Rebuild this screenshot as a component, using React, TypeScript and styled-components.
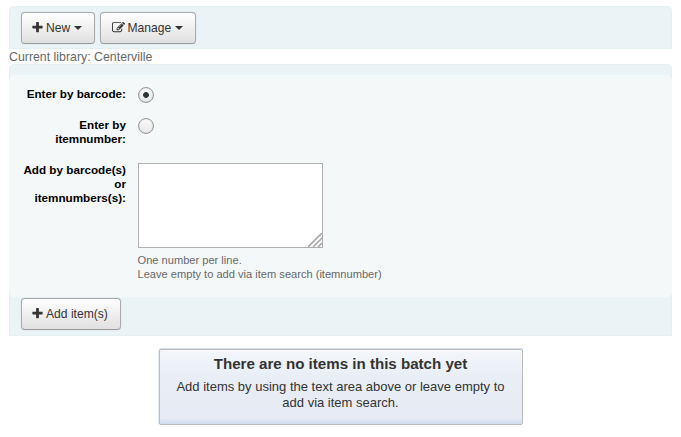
import React, { useState } from "react";
import styled, { createGlobalStyle } from "styled-components";

const GlobalStyle = createGlobalStyle`
  * { box-sizing: border-box; }
  body {
    margin: 0;
    background: #fff;
    color: #333;
    font-family: "Liberation Sans", Arial, sans-serif;
    font-size: 12.35px;
  }
`;

const Page = styled.main`
  padding: 6px 9px 0;
`;

const Toolbar = styled.div`
  display: flex;
  gap: 5px;
  height: 43px;
  padding: 5px 11px 0;
  background: #eaf3f5;
  border: 1px solid #e4eff0;
  border-radius: 5px 5px 0 0;
`;

const Button = styled.button<{ $width: number }>`
  display: flex;
  align-items: center;
  justify-content: flex-start;
  width: ${(p) => p.$width}px;
  height: 32px;
  padding: 0 0 1px 10px;
  border: 1px solid #aaa;
  border-bottom-color: #999;
  border-radius: 4px;
  background: linear-gradient(#fff, #e0e0e0);
  box-shadow: 0 0 1px rgba(0, 0, 0, 0.25);
  color: #333;
  font: 12.1px/18px "Liberation Sans", Arial, sans-serif;
  white-space: pre;
`;

const Icon = styled.svg<{ $before: number; $after: number }>`
  width: 13px;
  height: 13px;
  margin: 0 ${(p) => p.$after}px 0 ${(p) => p.$before}px;
  flex: none;
`;

const Caret = styled.span`
  width: 0;
  height: 0;
  margin: 1px 0 0 4px;
  border: 4px solid transparent;
  border-top-color: #333;
  border-bottom: 0;
`;

const Library = styled.div`
  height: 15px;
  color: #696969;
  line-height: 16px;
`;

const Form = styled.form`
  height: 272px;
  padding-top: 10px;
  background: #eaf3f5;
  border: 1px solid #e4eff0;
  border-radius: 5px 5px 0 0;
`;

const Fields = styled.div`
  height: 222px;
  margin: 0 -1px;
  padding: 12px 0 0 13px;
  background: #f4f8f9;
  border-radius: 5px;
`;

const Row = styled.div<{ $height: number }>`
  display: grid;
  grid-template-columns: 104px 1fr;
  column-gap: 12px;
  align-items: start;
  height: ${(p) => p.$height}px;
`;

const Label = styled.label`
  color: #000;
  font-size: 11.7px;
  font-weight: bold;
  line-height: 14px;
  text-align: right;
`;

const Radio = styled.input`
  appearance: none;
  width: 16px;
  height: 16px;
  margin: 0;
  border: 1px solid #999;
  border-radius: 50%;
  background: linear-gradient(#fbfbfb, #e8e8e8);
  box-shadow: inset 0 0 1px #aaa;

  &:checked {
    background: radial-gradient(circle, #2e3436 2.5px, transparent 3.3px),
      linear-gradient(#fbfbfb, #e8e8e8);
  }
`;

const AreaWrap = styled.div`
  position: relative;
  width: 185px;
  height: 85px;
`;

const Area = styled.textarea`
  display: block;
  width: 100%;
  height: 100%;
  padding: 4px;
  border: 1px solid #b0b0b0;
  background: #fff;
  outline: none;
  resize: none;
`;

const Grip = styled.svg`
  position: absolute;
  right: 1px;
  bottom: 1px;
  pointer-events: none;
`;

const Hint = styled.div`
  margin: 5px 0 0 -0.5px;
  color: #696969;
  font-size: 11.1px;
  line-height: 14px;
`;

const Actions = styled.div`
  padding: 1px 11px 0;
`;

const Message = styled.section`
  width: 364px;
  height: 76px;
  margin: 13px auto 0 150px;
  padding: 5px 14.5px 0 13.5px;
  border: 1px solid #bcbcbc;
  border-radius: 2px;
  background: linear-gradient(#f4f6fa 0%, #e8edf6 38%, #e6eaf4 92%, #d0ddef 100%);
  box-shadow: 0 -1px 0 #d2def0, -1px 0 0 #e6ecf5;
  text-align: center;
`;

const MessageTitle = styled.h3`
  margin: 0;
  font-size: 15.12px;
  line-height: 18px;
`;

const MessageText = styled.p`
  margin: 6px 0 0;
  font-size: 13px;
  line-height: 16px;
`;

const PlusIcon = () => (
  <Icon $before={-1} $after={2} viewBox="0 0 1792 1792" fill="currentColor">
    <path d="M1600 736v192q0 40-28 68t-68 28h-416v416q0 40-28 68t-68 28h-192q-40 0-68-28t-28-68v-416h-416q-40 0-68-28t-28-68v-192q0-40 28-68t68-28h416v-416q0-40 28-68t68-28h192q40 0 68 28t28 68v416h416q40 0 68 28t28 68z" />
  </Icon>
);

const EditIcon = () => (
  <Icon $before={0.5} $after={3} viewBox="0 0 1792 1792" fill="currentColor">
    <path d="M888 1184l116-116-152-152-116 116v56h96v96h56zm440-720q-16-16-33 1l-350 350q-17 17-1 33t33-1l350-350q17-17 1-33zm80 594v190q0 119-84.5 203.5t-203.5 84.5h-832q-119 0-203.5-84.5t-84.5-203.5v-832q0-119 84.5-203.5t203.5-84.5h832q63 0 117 25 15 7 18 23 3 17-9 29l-49 49q-14 14-32 8-23-6-45-6h-832q-66 0-113 47t-47 113v832q0 66 47 113t113 47h832q66 0 113-47t47-113v-126q0-13 9-22l64-64q15-15 35-7t20 29zm-96-738l288 288-672 672h-288v-288zm444 132l-92 92-288-288 92-92q28-28 68-28t68 28l152 152q28 28 28 68t-28 68z" />
  </Icon>
);

export default function App() {
  const [mode, setMode] = useState("barcode");
  return (
    <Page>
      <GlobalStyle />
      <Toolbar>
        <Button type="button" $width={74}>
          <PlusIcon />New<Caret />
        </Button>
        <Button type="button" $width={96}>
          <EditIcon />Manage<Caret />
        </Button>
      </Toolbar>
      <Library>Current library: Centerville</Library>
      <Form onSubmit={(e) => e.preventDefault()}>
        <Fields>
          <Row $height={31}>
            <Label htmlFor="barcode">Enter by barcode:</Label>
            <Radio id="barcode" type="radio" name="mode" checked={mode === "barcode"} onChange={() => setMode("barcode")} />
          </Row>
          <Row $height={45}>
            <Label htmlFor="number">Enter by itemnumber:</Label>
            <Radio id="number" type="radio" name="mode" checked={mode === "number"} onChange={() => setMode("number")} />
          </Row>
          <Row $height={120}>
            <Label htmlFor="list">Add by barcode(s) or itemnumbers(s):</Label>
            <div>
              <AreaWrap>
                <Area id="list" />
                <Grip width="14" height="14" viewBox="0 0 14 14" stroke="#aaa" strokeWidth="1.6">
                  <path d="M0 14L14 0M5 14L14 5M10 14L14 10" />
                </Grip>
              </AreaWrap>
              <Hint>
                One number per line.
                <br />
                Leave empty to add via item search (itemnumber)
              </Hint>
            </div>
          </Row>
        </Fields>
        <Actions>
          <Button type="submit" $width={100}>
            <PlusIcon />Add item(s)
          </Button>
        </Actions>
      </Form>
      <Message>
        <MessageTitle>There are no items in this batch yet</MessageTitle>
        <MessageText>Add items by using the text area above or leave empty to add via item search.</MessageText>
      </Message>
    </Page>
  );
}
